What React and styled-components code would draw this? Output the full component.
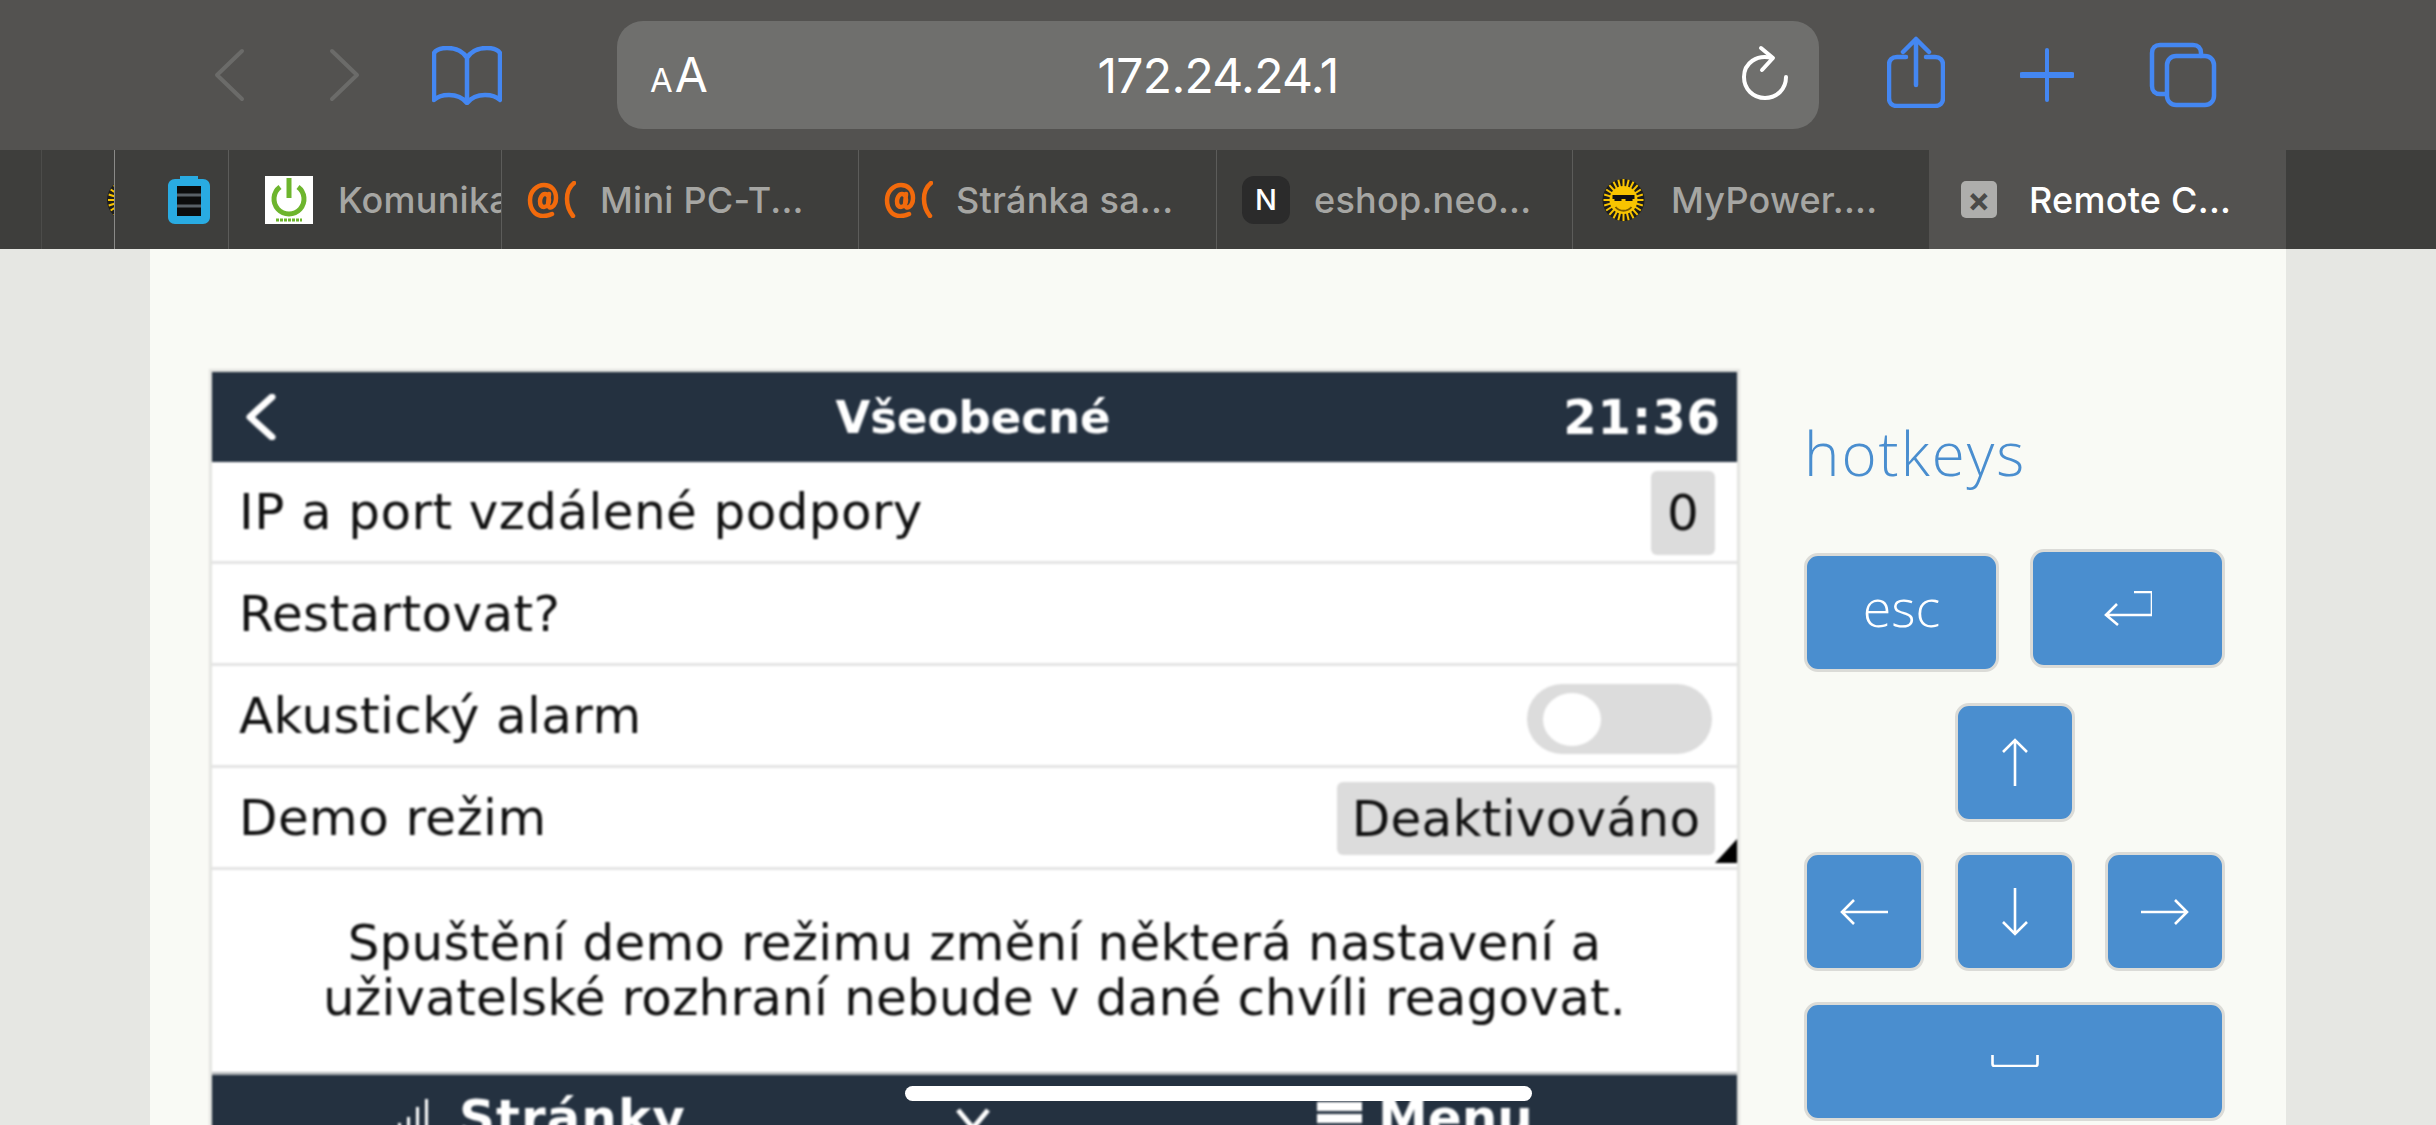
import React from "react";
import styled, { createGlobalStyle } from "styled-components";

const Global = createGlobalStyle`
  html, body { margin: 0; padding: 0; background: #e6e7e3; }
  #root { width: 2436px; height: 1125px; overflow: hidden; }
`;
const Screen = styled.div`
  position: relative; width: 2436px; height: 1125px; overflow: hidden;
  display: flex; flex-direction: column; background: #e6e7e3;
`;
const Toolbar = styled.header`
  height: 150px; flex: none; background: #535250; display: flex; align-items: center; padding-left: 214px;
`;
const ToolIcon = styled.svg`
  display: block; flex: none; width: ${p => p.$w}px; height: ${p => p.$h}px;
  margin-left: ${p => p.$ml || 0}px; margin-top: ${p => p.$mt || 0}px; fill: none;
  stroke: ${p => p.$c || "#4487f2"}; stroke-linecap: round; stroke-linejoin: round;
`;
const AddressBar = styled.div`
  position: relative; width: 1202px; height: 108px; margin-left: 115px; flex: none; background: #6f6f6d;
  border-radius: 26px; display: flex; align-items: center; justify-content: center; color: #fff;
  font-family: Inter, "Liberation Sans", sans-serif;
`;
const Reader = styled.span`
  position: absolute; left: 33px; top: 50%; transform: translateY(-50%); font-size: 48px; line-height: 1; font-weight: 400;
  small { font-size: 33px; margin-right: 2px; }
`;
const Url = styled.span` font-size: 48px; font-weight: 400; letter-spacing: -0.7px; `;
const Reload = styled.svg`
  position: absolute; right: 30px; top: 24px; width: 48px; height: 56px; fill: none; stroke: #fff; stroke-width: 4; stroke-linecap: round; stroke-linejoin: round;
`;
const TabStrip = styled.nav`
  height: 99px; flex: none; background: #3e3e3c; display: flex; padding-left: 41px;
`;
const Tab = styled.div`
  flex: none; box-sizing: border-box; width: ${p => p.$w}px; height: 99px; overflow: hidden; display: flex; align-items: center; gap: ${p => p.$gap || 26}px;
  padding-left: ${p => p.$pl}px; border-left: 1px solid ${p => p.$line || "#5c5c5a"};
  background: ${p => p.$active ? "#535250" : "transparent"}; color: ${p => p.$active ? "#fff" : "#a6a6a3"};
  font: 500 36px Inter, "Liberation Sans", sans-serif; letter-spacing: .25px; white-space: nowrap;
`;
const Favicon = styled.svg` display: block; flex: none; width: ${p => p.$w}px; height: ${p => p.$h}px; `;
const Notion = styled.span`
  flex: none; width: 48px; height: 48px; border-radius: 12px; background: #2b2b2b; color: #fff; display: flex; align-items: center; justify-content: center; font-size: 29px; font-weight: 500;
`;
const CloseFav = styled.span`
  flex: none; width: 36px; height: 37px; border-radius: 5px; background: #aeaeac; color: #4a4a48; display: flex; align-items: center; justify-content: center; font-size: 34px; line-height: 1; font-weight: 700;
`;
const Page = styled.main`
  flex: 1; min-height: 0; margin: 0 150px; background: #f9faf5; display: flex; align-items: flex-start; padding: 120px 0 0 59px;
`;
const Console = styled.section`
  flex: none; width: 1525px; border: 3px solid #e4e5e1; background: #fff; font-family: "DejaVu Sans", sans-serif; color: #111; filter: blur(.8px);
`;
const Bar = styled.div`
  background: #243140; color: #fff; font-weight: 700; position: relative;
`;
const Header = styled(Bar)`
  height: 90px; display: flex; align-items: center; justify-content: space-between; padding: 0 16px 0 33px; font-size: 45px;
`;
const Title = styled.span` position: absolute; left: 0; right: 3px; text-align: center; `;
const Clock = styled.span` font-size: 48px; letter-spacing: 1px; `;
const Row = styled.div`
  box-sizing: border-box; height: 102px; border-bottom: 3px solid #e4e4e4; display: flex; align-items: center; justify-content: space-between; padding: 0 22px 0 27px; font-size: 50px; letter-spacing: .4px; position: relative;
`;
const Value = styled.span`
  box-sizing: border-box; background: #dcdcdc; border-radius: 6px; width: ${p => p.$w}px; height: ${p => p.$h}px; margin-top: 2px; display: flex; align-items: center; justify-content: center; letter-spacing: .3px;
`;
const Toggle = styled.span`
  width: 185px; height: 70px; border-radius: 35px; background: #dcdcdc; position: relative; margin-right: 3px; margin-top: 7px;
  &::after { content: ""; position: absolute; left: 16px; top: 9px; width: 58px; height: 53px; border-radius: 50%; background: #fff; }
`;
const Corner = styled.span`
  position: absolute; right: 0; bottom: 4px; width: 0; height: 0; border-style: solid; border-width: 0 0 24px 22px; border-color: transparent transparent #000 transparent;
`;
const Note = styled.p`
  margin: 0; height: 202px; display: flex; align-items: center; justify-content: center; text-align: center; font-size: 50px; line-height: 55px; letter-spacing: .2px;
`;
const Footer = styled(Bar)`
  height: 60px; border-top: 3px solid #b5b8bb; overflow: hidden; font-size: 50px;
`;
const FooterItem = styled.span`
  position: absolute; top: ${p => p.$t || 18}px; left: ${p => p.$l}px; display: flex; align-items: flex-start; gap: ${p => p.$gap || 26}px; line-height: 1; letter-spacing: ${p => p.$ls || 0}px;
`;
const Side = styled.aside`
  margin-left: 64px; width: 421px; flex: none; display: flex; flex-direction: column; color: #4a8ecf; font-family: "Open Sans", Lato, sans-serif; font-weight: 300;
`;
const SideTitle = styled.h2` margin: 48px 0 60px; font-size: 60px; line-height: 72px; font-weight: 300; letter-spacing: 2px; `;
const KeyGroup = styled.div` display: flex; flex-direction: column; gap: 30.5px; `;
const KeyRow = styled.div` display: flex; justify-content: ${p => p.$j || "space-between"}; align-items: flex-start; `;
const Key = styled.button`
  box-sizing: border-box; flex: none; width: ${p => p.$w || 120}px; height: 119px; margin-top: ${p => p.$mt || 0}px; padding: 0;
  background: #4a8ecf; border: 3px solid #dbdbd7; border-radius: 14px; color: #fff; display: flex; align-items: center; justify-content: center;
  font: 300 52px "Open Sans", Lato, sans-serif;
`;
const KeyLabel = styled.span` display: block; margin-top: -12px; line-height: 1; `;
const KeyIcon = styled.svg` display: block; fill: none; stroke: #fff; stroke-width: 2.6; width: ${p => p.$w}px; height: ${p => p.$h}px; `;
const Home = styled.div`
  position: absolute; left: 905px; top: 1086px; width: 627px; height: 15px; border-radius: 8px; background: #fff;
`;

const SunRays = () => (
  <>
    <circle cx="21" cy="22" r="21" fill="#1d1d1b" />
    {Array.from({ length: 24 }, (_, i) => {
      const a = (i * Math.PI) / 12;
      return <line key={i} x1={21 + 12 * Math.cos(a)} y1={22 + 12 * Math.sin(a)} x2={21 + 20 * Math.cos(a)} y2={22 + 21 * Math.sin(a)} stroke="#f8c400" strokeWidth="2" />;
    })}
  </>
);
const At = () => (
  <Favicon $w={49} $h={37} viewBox="0 0 49 37">
    <g fill="none" stroke="#f26a0c" strokeWidth="4.5" strokeLinecap="round">
      <path d="M22 19c0 4-2 7-5 7s-4-3-4-6 2-7 5-7 4 3 4 6zm0-6l-1 11c0 2 2 3 4 2 3-2 4-5 4-9 0-8-5-13-12-13S3 10 3 19s5 16 13 16c4 0 7-1 9-2" />
      <path d="M47 2c-5 4-7 10-7 16s2 12 6 17" />
    </g>
  </Favicon>
);

export default function App() {
  return (
    <Screen>
      <Global />
      <Toolbar>
        <ToolIcon $w={31} $h={54} viewBox="0 0 31 54" $c="#6b6b69" strokeWidth="4"><path d="M28 3 3 27l25 24" /></ToolIcon>
        <ToolIcon $w={31} $h={54} $ml={84} viewBox="0 0 31 54" $c="#6b6b69" strokeWidth="4"><path d="m3 3 25 24L3 51" /></ToolIcon>
        <ToolIcon $w={70} $h={59} $ml={72} viewBox="0 0 70 59" strokeWidth="4.5">
          <path d="M35 12C31 5 24 2 15 2 9 2 4 4 2 7v47c4-4 9-5 15-5 8 0 14 3 18 8 4-5 10-8 18-8 6 0 11 1 15 5V7c-2-3-7-5-13-5-9 0-16 3-20 10zm0 0v45" />
        </ToolIcon>
        <AddressBar>
          <Reader><small>A</small>A</Reader>
          <Url>172.24.24.1</Url>
          <Reload viewBox="0 0 48 56"><path d="M31 13C16 9 3 18 3 32c0 12 9 21 21 21s21-9 21-21" /><path d="M20 3 32 13 21 25" /></Reload>
        </AddressBar>
        <ToolIcon $w={58} $h={72} $ml={68} $mt={-6} viewBox="0 0 58 72" strokeWidth="4.5">
          <path d="M19 21H10c-5 0-8 3-8 8v33c0 5 3 8 8 8h38c5 0 8-3 8-8V29c0-5-3-8-8-8h-9" /><path d="M29 49V3M16 16 29 3l13 13" />
        </ToolIcon>
        <ToolIcon $w={54} $h={54} $ml={75} viewBox="0 0 54 54" strokeWidth="4"><path d="M27 2v50" /><path d="M2 27h50" strokeWidth="6" /></ToolIcon>
        <ToolIcon $w={68} $h={66} $ml={75} viewBox="0 0 68 66" strokeWidth="4.5">
          <path d="M52 14v-3c0-5-3-8-8-8H11c-5 0-8 3-8 8v33c0 5 3 8 8 8h6" /><rect x="18" y="14" width="47" height="49" rx="9" />
        </ToolIcon>
      </Toolbar>
      <TabStrip>
        <Tab $w={73} $pl={65} $line="#4c4c4a"><Favicon $w={42} $h={44} viewBox="0 0 42 44"><SunRays /><circle cx="21" cy="22" r="14" fill="#f8c400" /></Favicon></Tab>
        <Tab $w={114} $pl={53} $line="#8a8a88">
          <Favicon $w={42} $h={48} viewBox="0 0 42 48"><path d="M12 0h18v3h5c4 0 7 3 7 7v31c0 4-3 7-7 7H7c-4 0-7-3-7-7V10c0-4 3-7 7-7h5z" fill="#29abe2" /><path d="M9 10h24v30H9z" fill="#0c0c0c" /><path d="M9 19h24M9 30h24" stroke="#596066" strokeWidth="3" /></Favicon>
        </Tab>
        <Tab $w={273} $pl={36} $gap={25}>
          <Favicon $w={48} $h={48} viewBox="0 0 48 48"><rect width="48" height="48" fill="#fff" /><path d="M15 11A15 15 0 1 0 33 11" fill="none" stroke="#6db52d" strokeWidth="5" /><path d="M24 2v20" stroke="#6db52d" strokeWidth="5" /><path d="M11 44h26" stroke="#6db52d" strokeWidth="3" strokeDasharray="3 1" /></Favicon>
          Komunikace
        </Tab>
        <Tab $w={357} $pl={25} $gap={24}><At />Mini PC-T...</Tab>
        <Tab $w={358} $pl={25} $gap={23}><At />Stránka sa...</Tab>
        <Tab $w={356} $pl={25} $gap={24}><Notion>N</Notion>eshop.neo...</Tab>
        <Tab $w={357} $pl={29}><Favicon $w={43} $h={44} viewBox="0 0 42 44"><SunRays /><circle cx="21" cy="22" r="14" fill="#f8c400" /><path d="M10 19h22M12 21h7M23 21h7" stroke="#111" strokeWidth="4" /><path d="M13 29c4 5 12 5 16 0" stroke="#7a5c00" strokeWidth="2" fill="none" /></Favicon>MyPower....</Tab>
        <Tab $w={357} $pl={31} $gap={32} $active $line="#535250"><CloseFav>×</CloseFav>Remote C...</Tab>
      </TabStrip>
      <Page>
        <Console>
          <Header>
            <svg width="31" height="46" viewBox="0 0 31 46" fill="none" stroke="#fff" strokeWidth="7" strokeLinecap="round" strokeLinejoin="round"><path d="M27 3 5 23l22 20" /></svg>
            <Title>Všeobecné</Title>
            <Clock>21:36</Clock>
          </Header>
          <Row>IP a port vzdálené podpory<Value $w={64} $h={84}>0</Value></Row>
          <Row>Restartovat?</Row>
          <Row>Akustický alarm<Toggle /></Row>
          <Row>Demo režim<Value $w={378} $h={73}>Deaktivováno</Value><Corner /></Row>
          <Note>Spuštění demo režimu změní některá nastavení a<br />uživatelské rozhraní nebude v dané chvíli reagovat.</Note>
          <Footer>
            <FooterItem $l={185} $ls={1}>
              <svg width="36" height="44" viewBox="0 0 36 44" fill="#fff"><path d="M1 30h3v14H1zM10 24h3v20h-3zM19 14h3v30h-3zM28 6h3v38h-3z" /></svg>
              Stránky
            </FooterItem>
            <FooterItem $l={743} $t={33}>
              <svg width="36" height="24" viewBox="0 0 36 24" fill="none" stroke="#fff" strokeWidth="5"><path d="m3 2 15 18L33 2" /></svg>
            </FooterItem>
            <FooterItem $l={1105} $gap={16}>
              <svg width="45" height="44" viewBox="0 0 45 44" fill="#fff"><path d="M0 9h45v9H0zM0 21h45v9H0zM0 33h45v9H0z" /></svg>
              Menu
            </FooterItem>
          </Footer>
        </Console>
        <Side>
          <SideTitle>hotkeys</SideTitle>
          <KeyGroup>
            <KeyRow><Key $w={195} $mt={4}><KeyLabel>esc</KeyLabel></Key><Key $w={195}><KeyIcon $w={48} $h={35} viewBox="0 0 48 35"><path d="M13 13 2 24l12 10M2 24h46V1H30" /></KeyIcon></Key></KeyRow>
            <KeyRow $j="center"><Key><KeyIcon $w={28} $h={48} viewBox="0 0 28 48"><path d="M2 14 14 2l12 12M14 2v46" /></KeyIcon></Key></KeyRow>
            <KeyRow>
              <Key><KeyIcon $w={48} $h={28} viewBox="0 0 48 28"><path d="M14 2 2 14l12 12M2 14h46" /></KeyIcon></Key>
              <Key><KeyIcon $w={28} $h={48} viewBox="0 0 28 48"><path d="M2 34l12 12 12-12M14 0v46" /></KeyIcon></Key>
              <Key><KeyIcon $w={48} $h={28} viewBox="0 0 48 28"><path d="m34 2 12 12-12 12M46 14H0" /></KeyIcon></Key>
            </KeyRow>
            <KeyRow><Key $w={421}><KeyIcon $w={48} $h={12} viewBox="0 0 48 12"><path d="M1.5 0v9q0 2 2 2h41q2 0 2-2V0" /></KeyIcon></Key></KeyRow>
          </KeyGroup>
        </Side>
      </Page>
      <Home />
    </Screen>
  );
}
